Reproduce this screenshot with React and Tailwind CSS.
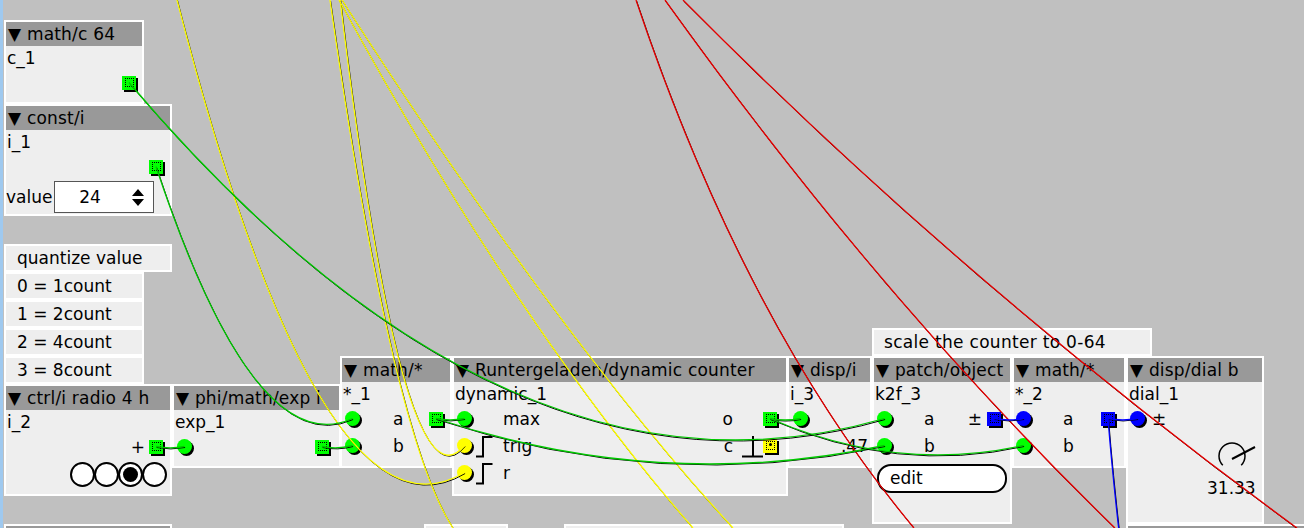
import React from 'react';

// Axoloti-style net: quadratic curve sagging below both ends
const wire = (x1, y1, x2, y2) => {
  const cx = (x1 + x2) / 2;
  const cy = Math.max(y1, y2) + 0.1 * Math.abs(y2 - y1) + 0.1 * Math.abs(x2 - x1);
  return `M${x1} ${y1} Q${cx} ${cy} ${x2} ${y2}`;
};

const GREEN = '#00c800';
const YELLOW = '#ffff00';
const RED = '#e80000';
const BLUE = '#0000ff';

const WIRES = [
  // nets coming from objects above the visible area
  { c: YELLOW, d: wire(130, -200, 464.5, 472.5) },
  { c: YELLOW, d: wire(300, -400, 464.5, 445.5) },
  { c: YELLOW, d: 'M330 0 Q392 436 453 528' },
  { c: YELLOW, d: 'M339 0 Q520 330 693 528' },
  { c: YELLOW, d: 'M342 0 Q560 340 733 528' },
  { c: RED, d: 'M636 0 Q745 325 914 528' },
  { c: RED, d: 'M665 0 Q880 300 1115 528' },
  { c: RED, d: 'M683 0 Q965 285 1297 528' },
  // visible nets
  { c: GREEN, d: wire(129, 82.5, 884.5, 418.5) },
  { c: GREEN, d: wire(156, 166.5, 352.5, 418.5) },
  { c: GREEN, d: wire(156, 446.5, 184.5, 446.5) },
  { c: GREEN, d: wire(322, 446.5, 352.5, 445.5) },
  { c: GREEN, d: wire(436, 418.5, 464.5, 418.5) },
  { c: GREEN, d: wire(436, 418.5, 884.5, 445.5) },
  { c: GREEN, d: wire(770, 418.5, 800.5, 418.5) },
  { c: GREEN, d: wire(770, 418.5, 1023.5, 445.5) },
  { c: BLUE, d: wire(994, 418.5, 1023.5, 418.5) },
  { c: BLUE, d: wire(1108, 418.5, 1137.5, 418.5) },
  { c: BLUE, d: 'M1108 418.5 Q1112 470 1120 540' },
];

function InJack({ color }) {
  return (
    <span className="relative block w-[17px] h-[17px] shrink-0">
      <span className="absolute left-[2px] top-[2px] w-[15px] h-[15px] rounded-full bg-black" />
      <span className={`absolute left-0 top-0 w-[15px] h-[15px] rounded-full ${color}`} />
    </span>
  );
}

function OutJack({ color, dot }) {
  return (
    <span className="relative block w-[16px] h-[16px] shrink-0">
      <span className="absolute left-[2px] top-[2px] w-[14px] h-[14px] bg-black" />
      <span className={`absolute left-0 top-0 w-[14px] h-[14px] flex items-center justify-center ${color}`}>
        <span className="relative w-[9px] h-[9px] border border-dotted border-black">
          {dot && <span className="absolute left-[2px] top-[1px] w-[3px] h-[3px] rounded-full bg-black" />}
        </span>
      </span>
    </span>
  );
}

function StepIcon() {
  return (
    <svg width="17" height="22" viewBox="0 0 17 22" className="shrink-0">
      <path d="M0 20.5 H7 V1 H16.5" fill="none" stroke="#000" strokeWidth="2" />
    </svg>
  );
}

function PulseIcon() {
  return (
    <svg width="30" height="22" viewBox="0 0 30 22" className="shrink-0">
      <path d="M9 20.5 H30 M20 0 V20.5" fill="none" stroke="#000" strokeWidth="2" />
    </svg>
  );
}

function Obj({ className, title, name, children }) {
  return (
    <div className={`absolute border-2 border-white bg-[#eeeeee] overflow-hidden ${className}`}>
      <div className="h-[24px] bg-[#999999] flex items-center pl-[2px] whitespace-nowrap tracking-[0.2px]">
        {title !== undefined && `▼ ${title}`}
      </div>
      {name && <div className="h-[24px] flex items-center pl-[1px] whitespace-nowrap">{name}</div>}
      {children}
    </div>
  );
}

function Comment({ className, children }) {
  return (
    <div className={`absolute border-2 border-white bg-[#eeeeee] flex items-center whitespace-nowrap ${className}`}>
      {children}
    </div>
  );
}

function Radio({ on }) {
  return (
    <span className="-ml-[1px] w-[25px] h-[25px] rounded-full border-2 border-black bg-white flex items-center justify-center">
      {on && <span className="w-[15px] h-[15px] rounded-full bg-black" />}
    </span>
  );
}

export default function App() {
  return (
    <div className="relative w-[1304px] h-[528px] overflow-hidden bg-[#c0c0c0] font-['DejaVu_Sans',sans-serif] text-[17px] leading-none text-black">
      <div className="absolute left-0 top-0 w-[3px] h-full bg-[#9fc9ef]" />

      <Obj className="left-[4px] top-[20px] w-[140px] h-[84px]" title="math/c 64" name="c_1">
        <div className="h-[27px] flex items-center justify-end pr-[4px]">
          <OutJack color="bg-[#00ff00]" />
        </div>
      </Obj>

      <Obj className="left-[4px] top-[104px] w-[168px] h-[112px]" title="const/i" name="i_1">
        <div className="h-[27px] flex items-center justify-end pr-[5px]">
          <OutJack color="bg-[#00ff00]" />
        </div>
        <div className="h-[32px] flex items-center">
          <span className="w-[48px]">value</span>
          <div className="w-[100px] h-[32px] border border-[#555555] bg-white flex items-center">
            <span className="w-[70px] text-center">24</span>
            <svg width="14" height="22" viewBox="0 0 14 22" className="ml-[6px]">
              <path d="M1 10 L7 3 L13 10 Z M1 13 L7 20 L13 13 Z" fill="#000" />
            </svg>
          </div>
        </div>
      </Obj>

      <Comment className="left-[4px] top-[244px] w-[168px] h-[28px] pl-[11px]">quantize value</Comment>
      <Comment className="left-[4px] top-[272px] w-[140px] h-[28px] pl-[11px]">0 = 1count</Comment>
      <Comment className="left-[4px] top-[300px] w-[140px] h-[28px] pl-[11px]">1 = 2count</Comment>
      <Comment className="left-[4px] top-[328px] w-[140px] h-[28px] pl-[11px]">2 = 4count</Comment>
      <Comment className="left-[4px] top-[356px] w-[140px] h-[28px] pl-[11px]">3 = 8count</Comment>

      <Obj className="left-[4px] top-[384px] w-[168px] h-[112px]" title="ctrl/i radio 4 h" name="i_2">
        <div className="h-[27px] flex items-center justify-end pr-[5px]">
          <span className="mr-[4px]">+</span>
          <OutJack color="bg-[#00ff00]" />
        </div>
        <div className="h-[26px] flex items-center justify-end pr-[3px]">
          <Radio />
          <Radio />
          <Radio on />
          <Radio />
        </div>
      </Obj>

      <Obj className="left-[172px] top-[384px] w-[169px] h-[84px]" title="phi/math/exp i" name="exp_1">
        <div className="h-[27px] flex items-center pl-[3px] pr-[8px]">
          <InJack color="bg-[#00ff00]" />
          <span className="ml-auto" />
          <OutJack color="bg-[#00ff00]" />
        </div>
      </Obj>

      <Obj className="left-[340px] top-[356px] w-[112px] h-[112px]" title="math/*" name="*_1">
        <div className="h-[27px] flex items-center pl-[3px] pr-[5px]">
          <InJack color="bg-[#00ff00]" />
          <span className="ml-[31px]">a</span>
          <span className="ml-auto" />
          <OutJack color="bg-[#00ff00]" />
        </div>
        <div className="h-[27px] flex items-center pl-[3px] pr-[5px]">
          <InJack color="bg-[#00ff00]" />
          <span className="ml-[31px]">b</span>
        </div>
      </Obj>

      <Obj className="left-[452px] top-[356px] w-[336px] h-[140px]" title="Runtergeladen/dynamic counter" name="dynamic_1">
        <div className="h-[27px] flex items-center pl-[3px] pr-[7px]">
          <InJack color="bg-[#00ff00]" />
          <span className="ml-[29px]">max</span>
          <span className="ml-auto">o</span>
          <span className="w-[30px]" />
          <OutJack color="bg-[#00ff00]" />
        </div>
        <div className="h-[27px] flex items-center pl-[3px] pr-[7px]">
          <InJack color="bg-[#ffff00]" />
          <span className="ml-[2px]"><StepIcon /></span>
          <span className="ml-[10px]">trig</span>
          <span className="ml-auto">c</span>
          <PulseIcon />
          <OutJack color="bg-[#ffff00]" dot />
        </div>
        <div className="h-[27px] flex items-center pl-[3px]">
          <InJack color="bg-[#ffff00]" />
          <span className="ml-[2px]"><StepIcon /></span>
          <span className="ml-[10px]">r</span>
        </div>
      </Obj>

      <Obj className="left-[787px] top-[356px] w-[85px] h-[112px]" title="disp/i" name="i_3">
        <div className="h-[27px] flex items-center pl-[4px]">
          <InJack color="bg-[#00ff00]" />
        </div>
        <div className="h-[27px] flex items-center justify-end pr-[2px]">.47</div>
      </Obj>

      <Comment className="left-[872px] top-[328px] w-[280px] h-[28px] pl-[10px] tracking-[0.3px]">scale the counter to 0-64</Comment>

      <Obj className="left-[872px] top-[356px] w-[140px] h-[168px]" title="patch/object" name="k2f_3">
        <div className="h-[27px] flex items-center pl-[3px] pr-[7px]">
          <InJack color="bg-[#00ff00]" />
          <span className="ml-[30px]">a</span>
          <span className="ml-auto">±</span>
          <span className="w-[5px]" />
          <OutJack color="bg-[#0000ff]" />
        </div>
        <div className="h-[27px] flex items-center pl-[3px]">
          <InJack color="bg-[#00ff00]" />
          <span className="ml-[30px]">b</span>
        </div>
        <div className="mt-[4px] ml-[3px] w-[130px] h-[29px] border-2 border-black rounded-[14px] bg-white flex items-center pl-[11px]">
          edit
        </div>
      </Obj>

      <Obj className="left-[1012px] top-[356px] w-[114px] h-[112px]" title="math/*" name="*_2">
        <div className="h-[27px] flex items-center pl-[2px] pr-[7px]">
          <InJack color="bg-[#0000ff]" />
          <span className="ml-[30px]">a</span>
          <span className="ml-auto" />
          <OutJack color="bg-[#0000ff]" />
        </div>
        <div className="h-[27px] flex items-center pl-[2px]">
          <InJack color="bg-[#00ff00]" />
          <span className="ml-[30px]">b</span>
        </div>
      </Obj>

      <Obj className="left-[1126px] top-[356px] w-[138px] h-[168px]" title="disp/dial b" name="dial_1">
        <div className="h-[27px] flex items-center pl-[2px]">
          <InJack color="bg-[#0000ff]" />
          <span className="ml-[5px]">±</span>
        </div>
        <div className="mt-[8px] ml-[86px]">
          <svg width="44" height="32" viewBox="0 0 44 32">
            <path d="M8.8 24.2 A13 13 0 1 1 27.2 24.2" fill="none" stroke="#000" strokeWidth="1.5" />
            <path d="M18 18 L41 6" fill="none" stroke="#000" strokeWidth="2" />
          </svg>
        </div>
        <div className="mt-[7px] ml-[79px]">31.33</div>
      </Obj>

      {/* objects cut off by the bottom edge */}
      <Obj className="left-[4px] top-[524px] w-[168px] h-[60px]" />
      <Comment className="left-[424px] top-[524px] w-[84px] h-[40px]" />
      <Comment className="left-[564px] top-[524px] w-[280px] h-[40px]" />
      <Obj className="left-[1126px] top-[524px] w-[180px] h-[60px]" />

      <svg className="absolute left-0 top-0 pointer-events-none" width="1304" height="528">
        {WIRES.map((w, i) => (
          <g key={i} fill="none">
            <path d={w.d} stroke="#000" strokeWidth="1" transform="translate(0.6 1)" />
            <path d={w.d} stroke={w.c} strokeWidth="1.3" />
          </g>
        ))}
      </svg>
    </div>
  );
}
